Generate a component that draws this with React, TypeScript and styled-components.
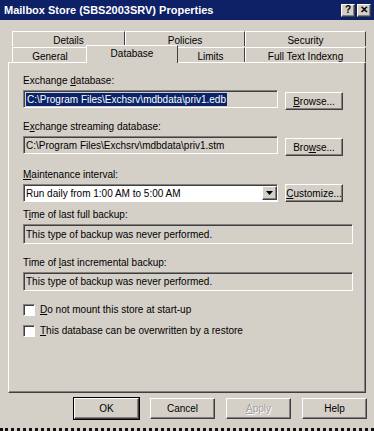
import * as React from 'react';
import styled, { createGlobalStyle, css } from 'styled-components';

const GlobalStyle = createGlobalStyle`
    html, body {
        margin: 0;
        padding: 0;
        background: #d4d0c8;
    }
    body {
        font-family: "Liberation Sans", Arial, sans-serif;
        font-size: 10px;
        color: #000;
    }
`

const raised = css`
    border-style: solid;
    border-width: 1px;
    border-color: #fff #404040 #404040 #fff;
    box-shadow: inset -1px -1px 0 #808080;
`

const sunken = css`
    border-style: solid;
    border-width: 1px;
    border-color: #808080 #fff #fff #808080;
    box-shadow: inset 1px 1px 0 #404040;
`

const Window = styled.div`
    width: 374px;
    height: 431px;
    box-sizing: border-box;
    display: flex;
    flex-direction: column;
    background: #d4d0c8;
    border-bottom: 3px dotted #111;
`

const TitleBar = styled.div`
    height: 20px;
    display: flex;
    align-items: center;
    padding: 0 3px 0 4px;
    background: #0e2066;
    color: #fff;
    font-weight: bold;
    font-size: 11px;
`

const TitleText = styled.div`
    flex: 1;
`

const CapButton = styled.div`
    width: 12px;
    height: 11px;
    margin-left: 2px;
    ${raised};
    background: #d4d0c8;
    color: #000;
    font-size: 10px;
    font-weight: bold;
    display: flex;
    align-items: center;
    justify-content: center;
    line-height: 1;
`

const Body = styled.div`
    flex: 1;
    display: flex;
    flex-direction: column;
    padding: 11px 8px 0 8px;
`

const TabRow = styled.div<{ $front?: boolean }>`
    display: flex;
    height: ${p => p.$front ? 16 : 15}px;
    margin: 0 0 0 4px;
    align-items: flex-end;
`

const Tab = styled.div<{ $w: number; $active?: boolean }>`
    width: ${p => p.$w}px;
    box-sizing: border-box;
    height: 15px;
    display: flex;
    align-items: center;
    justify-content: center;
    padding-top: 2px;
    border-top: 1px solid #fff;
    border-left: 1px solid #fff;
    border-right: 1px solid #404040;
    ${p => p.$active && css`
        height: 18px;
        margin: 0 -2px -1px -2px;
        width: ${p.$w + 4}px;
        padding-top: 0;
        padding-bottom: 3px;
        background: #d4d0c8;
        position: relative;
        z-index: 1;
    `}
`

const Panel = styled.div`
    height: 331px;
    box-sizing: border-box;
    border-style: solid;
    border-width: 1px;
    border-color: #fff #404040 #404040 #fff;
    box-shadow: inset -1px -1px 0 #808080;
    padding: 11px 12px 0 14px;
    display: flex;
    flex-direction: column;
`

const Label = styled.div<{ $gap?: number }>`
    height: 13px;
    line-height: 13px;
    margin-top: ${p => p.$gap ?? 0}px;
    margin-bottom: 3px;
    white-space: nowrap;
`

const FieldRow = styled.div`
    display: flex;
    align-items: flex-start;
    gap: 7px;
`

const TextBox = styled.div<{ $w: number; $h?: number; $white?: boolean }>`
    width: ${p => p.$w}px;
    height: ${p => p.$h ?? 18}px;
    box-sizing: border-box;
    ${sunken};
    background: ${p => p.$white ? '#fff' : '#d4d0c8'};
    display: flex;
    align-items: center;
    padding-left: 2px;
    white-space: nowrap;
    overflow: hidden;
`

const Selected = styled.span`
    background: #0a246a;
    color: #fff;
    padding: 1px 1px;
`

const Button = styled.div<{ $w: number; $h?: number; $top?: number; $disabled?: boolean; $default?: boolean }>`
    width: ${p => p.$w}px;
    height: ${p => p.$h ?? 18}px;
    margin-top: ${p => p.$top ?? 0}px;
    box-sizing: border-box;
    ${raised};
    display: flex;
    align-items: center;
    justify-content: center;
    white-space: nowrap;
    color: ${p => p.$disabled ? '#a0a0a0' : '#000'};
    text-shadow: ${p => p.$disabled ? '1px 1px 0 #fff' : 'none'};
    ${p => p.$default && css`
        outline: 1px solid #000;
        outline-offset: 0;
    `}
`

const DropArrow = styled.div`
    width: 15px;
    height: 14px;
    box-sizing: border-box;
    margin-left: auto;
    ${raised};
    background: #d4d0c8;
    display: flex;
    align-items: center;
    justify-content: center;
`

const CheckRow = styled.div<{ $gap: number }>`
    display: flex;
    align-items: center;
    gap: 5px;
    margin-top: ${p => p.$gap}px;
    height: 13px;
`

const CheckBox = styled.div`
    width: 12px;
    height: 12px;
    box-sizing: border-box;
    ${sunken};
    background: #fff;
`

const Footer = styled.div`
    display: flex;
    justify-content: flex-end;
    gap: 11px;
    margin: 5px -1px 0 0;
`

const U = styled.span`
    text-decoration: underline;
`

export default function App() {
    return (
        <>
            <GlobalStyle />
            <Window>
                <TitleBar>
                    <TitleText>Mailbox Store (SBS2003SRV) Properties</TitleText>
                    <CapButton>?</CapButton>
                    <CapButton>✕</CapButton>
                </TitleBar>
                <Body>
                    <TabRow>
                        <Tab $w={113}>Details</Tab>
                        <Tab $w={120}>Policies</Tab>
                        <Tab $w={121}>Security</Tab>
                    </TabRow>
                    <TabRow $front>
                        <Tab $w={76}>General</Tab>
                        <Tab $w={88} $active>Database</Tab>
                        <Tab $w={69}>Limits</Tab>
                        <Tab $w={121}>Full Text Indexng</Tab>
                    </TabRow>
                    <Panel>
                        <Label>Exchange <U>d</U>atabase:</Label>
                        <FieldRow>
                            <TextBox $w={255}>
                                <Selected>C:\Program Files\Exchsrv\mdbdata\priv1.edb</Selected>
                            </TextBox>
                            <Button $w={58} $top={2}><U>B</U>rowse...</Button>
                        </FieldRow>
                        <Label $gap={10}>E<U>x</U>change streaming database:</Label>
                        <FieldRow>
                            <TextBox $w={255}>C:\Program Files\Exchsrv\mdbdata\priv1.stm</TextBox>
                            <Button $w={58} $top={2}>Bro<U>w</U>se...</Button>
                        </FieldRow>
                        <Label $gap={12}><U>M</U>aintenance interval:</Label>
                        <FieldRow>
                            <TextBox $w={255} $white>
                                Run daily from 1:00 AM to 5:00 AM
                                <DropArrow>
                                    <svg width="7" height="4" viewBox="0 0 7 4">
                                        <path d="M0 0h7L3.5 4z" fill="#000" />
                                    </svg>
                                </DropArrow>
                            </TextBox>
                            <Button $w={58}><U>C</U>ustomize...</Button>
                        </FieldRow>
                        <Label $gap={6}>T<U>i</U>me of last full backup:</Label>
                        <TextBox $w={330} $h={20}>This type of backup was never performed.</TextBox>
                        <Label $gap={12}>Time of <U>l</U>ast incremental backup:</Label>
                        <TextBox $w={330} $h={19}>This type of backup was never performed.</TextBox>
                        <CheckRow $gap={12}>
                            <CheckBox />
                            <span><U>D</U>o not mount this store at start-up</span>
                        </CheckRow>
                        <CheckRow $gap={8}>
                            <CheckBox />
                            <span><U>T</U>his database can be overwritten by a restore</span>
                        </CheckRow>
                    </Panel>
                    <Footer>
                        <Button $w={65} $h={21} $default>OK</Button>
                        <Button $w={65} $h={21}>Cancel</Button>
                        <Button $w={65} $h={21} $disabled><U>A</U>pply</Button>
                        <Button $w={65} $h={21}>Help</Button>
                    </Footer>
                </Body>
            </Window>
        </>
    )
}
